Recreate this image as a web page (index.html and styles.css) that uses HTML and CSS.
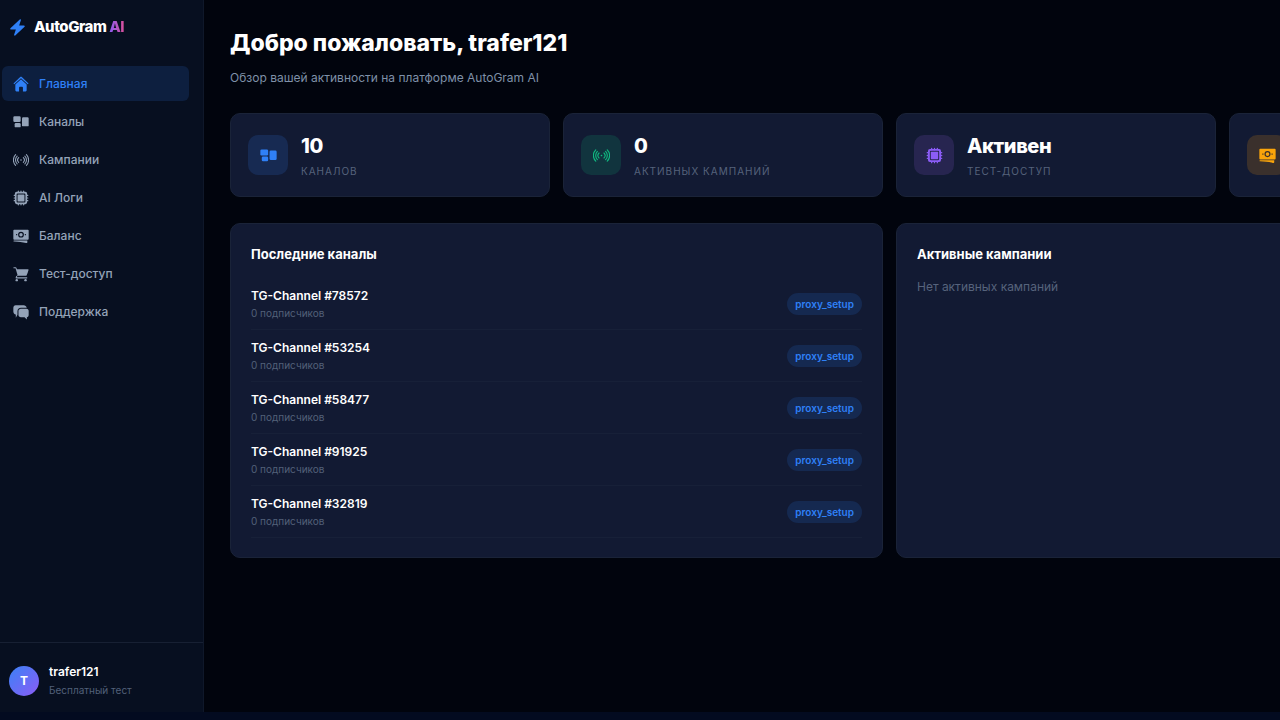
FILE: index.html
```html
<!DOCTYPE html>
<html lang="ru">
<head>
    <meta charset="UTF-8">
    <meta name="viewport" content="width=device-width, initial-scale=1.0">
    <title>AutoGram AI</title>
    <link rel="stylesheet" href="styles.css">
</head>
<body>

<svg class="sprite" aria-hidden="true">
    <symbol id="icon-home" viewBox="0 0 24 24">
        <path d="M11.2 1.3a1.2 1.2 0 0 1 1.600 0L23.300 11.200l-1.200 1.300L12 3.200l-10.100 9.300L.7 11.200z"/>
        <path d="M12 4.800l8.500 7.800v8.900a1.600 1.600 0 0 1-1.600 1.600h-4v-5.600a1.200 1.200 0 0 0-1.200-1.200h-3.400a1.200 1.200 0 0 0-1.200 1.200v5.600h-4a1.600 1.600 0 0 1-1.600-1.600v-8.900z"/>
    </symbol>
    <symbol id="icon-channels" viewBox="0 0 24 24">
        <rect x="0.5" y="3.5" width="11" height="8.5" rx="1.8"/>
        <rect x="2.5" y="13.5" width="9" height="6.5" rx="1.8"/>
        <rect x="13.5" y="5" width="10" height="13.5" rx="1.8"/>
    </symbol>
    <symbol id="icon-signal" viewBox="0 0 24 24">
        <g fill="none" stroke="currentColor" stroke-width="1.6" stroke-linecap="round">
            <path d="M3.900 4a11.300 11.300 0 0 0 0 16M20.100 4a11.300 11.300 0 0 1 0 16"/>
            <path d="M6.200 6.200a8.200 8.200 0 0 0 0 11.600M17.800 6.200a8.200 8.200 0 0 1 0 11.600"/>
            <path d="M8.500 8.500a5 5 0 0 0 0 7M15.500 8.500a5 5 0 0 1 0 7"/>
        </g>
        <circle cx="12" cy="12" r="1.2"/>
    </symbol>
    <symbol id="icon-chip" viewBox="0 0 24 24">
        <path d="M8 1.8v2M12 1.8v2M16 1.8v2M8 20.2v2M12 20.2v2M16 20.2v2M1.800 8h2M1.800 12h2M1.800 16h2M20.200 8h2M20.200 12h2M20.200 16h2" stroke="currentColor" stroke-width="1.8" stroke-linecap="round"/>
        <path fill-rule="evenodd" d="M5.500 2.800h13A2.700 2.700 0 0 1 21.200 5.500v13a2.700 2.700 0 0 1-2.700 2.700h-13A2.700 2.700 0 0 1 2.800 18.500v-13A2.700 2.700 0 0 1 5.500 2.800zM6.900 5.400A1.500 1.500 0 0 0 5.400 6.900v10.200a1.500 1.500 0 0 0 1.500 1.500h10.200a1.500 1.500 0 0 0 1.500-1.500V6.900a1.500 1.500 0 0 0-1.500-1.500z"/>
        <rect x="6.8" y="6.8" width="10.4" height="10.4" rx="0.8"/>
    </symbol>
    <symbol id="icon-cash" viewBox="0 0 24 24">
        <path fill-rule="evenodd" d="M1.800 2.500h20.400a1.300 1.300 0 0 1 1.300 1.300v12.400a1.300 1.300 0 0 1-1.300 1.300H1.800A1.300 1.300 0 0 1 .5 16.200V3.800A1.300 1.300 0 0 1 1.800 2.500zM12 5.700a4.300 4.300 0 1 0 0 8.600 4.300 4.300 0 0 0 0-8.600zM12 7.400a2.600 2.600 0 1 1 0 5.200 2.600 2.600 0 0 1 0-5.200zM4.700 9v2h1.600V9zM17.700 9v2h1.600V9z"/>
        <path d="M1.500 18.600h20v2.600c0 1-.9 1.600-1.900 1.400-5.600-1.500-11-2.300-18.100-2.400a.8.800 0 0 1 0-1.600z"/>
    </symbol>
    <symbol id="icon-cart" viewBox="0 0 24 24">
        <path d="M1.300 1.800h2.300c.9 0 1.500.5 1.700 1.300l.5 1.900h16.800c.6 0 .9.500.7 1-.9 3.100-1.900 5.700-3 8.200-.2.400-.5.600-.9.600H8.200a2.500 2.500 0 0 0-2.500 2.200h15.600v1.600H4.800a.9.900 0 0 1-.9-.9 4.200 4.200 0 0 1 3-4L3.800 3.400H1.300a.8.800 0 0 1 0-1.600z"/>
        <circle cx="5.600" cy="21.200" r="1.800"/>
        <circle cx="18.800" cy="21.200" r="1.800"/>
    </symbol>
    <symbol id="icon-chat" viewBox="0 0 24 24">
        <path d="M4 1.800h12c2.200 0 4.200 1.500 4.600 3.900H12c-3.200 0-5.300 2-5.300 5.100v5.400L4.200 20.500v-4.600C1.900 15.500.5 13.800.5 11.400V6c0-2.400 1.400-4.200 3.500-4.200z"/>
        <path d="M11.800 7.200h8.500c2 0 3.200 1.400 3.200 3.300v6c0 1.800-1 3-2.700 3.200v3.500l-3.500-3.400h-5.500c-2 0-3.600-1.300-3.600-3.300v-6c0-1.900 1.600-3.300 3.600-3.300z"/>
    </symbol>
</svg>

<div class="app">
    <aside class="sidebar">
        <a class="logo" href="#">
            <svg class="logo-icon" viewBox="0 0 24 24" aria-hidden="true"><path d="M15.200.8c.7-.7 1.900 0 1.600 1L14.300 9.200h6.900c1 0 1.400 1.100.8 1.800L8.800 23.200c-.7.700-1.900 0-1.600-1l2.500-7.400H2.800c-1 0-1.400-1.100-.8-1.800z"/></svg>
            <span class="logo-text">AutoGram <span class="logo-accent">AI</span></span>
        </a>

        <nav class="nav">
            <a class="nav-item active" href="#"><svg class="icon"><use href="#icon-home"/></svg>Главная</a>
            <a class="nav-item" href="#"><svg class="icon"><use href="#icon-channels"/></svg>Каналы</a>
            <a class="nav-item" href="#"><svg class="icon"><use href="#icon-signal"/></svg>Кампании</a>
            <a class="nav-item" href="#"><svg class="icon"><use href="#icon-chip"/></svg>AI Логи</a>
            <a class="nav-item" href="#"><svg class="icon"><use href="#icon-cash"/></svg>Баланс</a>
            <a class="nav-item" href="#"><svg class="icon"><use href="#icon-cart"/></svg>Тест-доступ</a>
            <a class="nav-item" href="#"><svg class="icon"><use href="#icon-chat"/></svg>Поддержка</a>
        </nav>

        <div class="user">
            <div class="avatar">T</div>
            <div>
                <div class="user-name">trafer121</div>
                <div class="user-plan">Бесплатный тест</div>
            </div>
        </div>
    </aside>

    <main class="main">
        <h1>Добро пожаловать, trafer121</h1>
        <p class="subtitle">Обзор вашей активности на платформе AutoGram AI</p>

        <div class="stats">
            <div class="card stat">
                <div class="stat-icon blue"><svg class="icon"><use href="#icon-channels"/></svg></div>
                <div>
                    <div class="stat-value">10</div>
                    <div class="stat-label">Каналов</div>
                </div>
            </div>
            <div class="card stat">
                <div class="stat-icon green"><svg class="icon"><use href="#icon-signal"/></svg></div>
                <div>
                    <div class="stat-value">0</div>
                    <div class="stat-label">Активных кампаний</div>
                </div>
            </div>
            <div class="card stat">
                <div class="stat-icon purple"><svg class="icon"><use href="#icon-chip"/></svg></div>
                <div>
                    <div class="stat-value">Активен</div>
                    <div class="stat-label">Тест-доступ</div>
                </div>
            </div>
            <div class="card stat">
                <div class="stat-icon orange"><svg class="icon"><use href="#icon-cash"/></svg></div>
            </div>
        </div>

        <div class="panels">
            <section class="card panel">
                <h2>Последние каналы</h2>
                <ul class="channels">
                    <li class="channel">
                        <div>
                            <div class="channel-name">TG-Channel #78572</div>
                            <div class="channel-subs">0 подписчиков</div>
                        </div>
                        <span class="badge">proxy_setup</span>
                    </li>
                    <li class="channel">
                        <div>
                            <div class="channel-name">TG-Channel #53254</div>
                            <div class="channel-subs">0 подписчиков</div>
                        </div>
                        <span class="badge">proxy_setup</span>
                    </li>
                    <li class="channel">
                        <div>
                            <div class="channel-name">TG-Channel #58477</div>
                            <div class="channel-subs">0 подписчиков</div>
                        </div>
                        <span class="badge">proxy_setup</span>
                    </li>
                    <li class="channel">
                        <div>
                            <div class="channel-name">TG-Channel #91925</div>
                            <div class="channel-subs">0 подписчиков</div>
                        </div>
                        <span class="badge">proxy_setup</span>
                    </li>
                    <li class="channel">
                        <div>
                            <div class="channel-name">TG-Channel #32819</div>
                            <div class="channel-subs">0 подписчиков</div>
                        </div>
                        <span class="badge">proxy_setup</span>
                    </li>
                </ul>
            </section>
            <section class="card panel">
                <h2>Активные кампании</h2>
                <p class="empty">Нет активных кампаний</p>
            </section>
        </div>
    </main>
</div>

</body>
</html>
```

FILE: styles.css
```css
* {
    box-sizing: border-box;
    margin: 0;
    padding: 0;
}
body {
    font-family: Inter, "Noto Sans", sans-serif;
    font-size: 12px;
    line-height: 18px;
    color: #ffffff;
    background: #030b20;
}
a {
    color: inherit;
    text-decoration: none;
}
.sprite {
    display: none;
}
.icon {
    width: 16px;
    height: 16px;
    fill: currentColor;
    flex-shrink: 0;
}
.app {
    display: flex;
    height: 100vh;
    padding-bottom: 8px;
    overflow: hidden;
}

/* Sidebar */
.sidebar {
    display: flex;
    flex-direction: column;
    flex: 0 0 204px;
    background: #070f20;
    border-right: 1px solid #0f182a;
}
.logo {
    display: flex;
    align-items: center;
    gap: 8px;
    padding: 17px 9px 20px;
    font-size: 15px;
    line-height: 20px;
    font-weight: 800;
    letter-spacing: -0.03em;
}
.logo-icon {
    width: 17px;
    height: 17px;
    fill: #2f80f7;
}
.logo-accent {
    background: linear-gradient(90deg, #8b5cf6, #d94f9a);
    background-clip: text;
    -webkit-background-clip: text;
    color: transparent;
}
.nav {
    display: flex;
    flex-direction: column;
    gap: 3px;
    padding: 9px 14px 9px 2px;
}
.nav-item {
    display: flex;
    align-items: center;
    gap: 10px;
    height: 35px;
    padding: 0 11px;
    border-radius: 6px;
    font-weight: 500;
    color: #94a3b8;
}
.nav-item:hover {
    color: #ffffff;
}
.nav-item.active {
    background: #0d1f3f;
    color: #2f80f7;
}
.user {
    display: flex;
    align-items: center;
    gap: 10px;
    margin-top: auto;
    padding: 20px 9px 13px;
    border-top: 1px solid #172033;
}
.avatar {
    width: 30px;
    height: 30px;
    border-radius: 50%;
    background: linear-gradient(135deg, #3b82f6, #8b5cf6);
    font-weight: 700;
    line-height: 30px;
    text-align: center;
}
.user-name {
    font-weight: 600;
}
.user-plan {
    font-size: 10px;
    color: #526079;
}

/* Content */
.main {
    flex: 1;
    min-width: 0;
    padding: 26px;
    background: #01040d;
    overflow: hidden;
}
h1 {
    font-size: 23px;
    line-height: 34px;
    font-weight: 800;
}
.subtitle {
    margin: 9px 0 26px;
    color: #7f90a8;
}
.card {
    background: #121a33;
    border: 1px solid #1a2338;
    border-radius: 10px;
}
.stats {
    display: grid;
    grid-template-columns: repeat(4, minmax(320px, 1fr));
    gap: 13px;
    margin-bottom: 26px;
}
.stat {
    display: flex;
    align-items: center;
    gap: 13px;
    padding: 16px 17px;
}
.stat-icon {
    display: flex;
    align-items: center;
    justify-content: center;
    width: 40px;
    height: 40px;
    border-radius: 10px;
}
.stat-icon .icon {
    width: 17px;
    height: 17px;
}
.stat-icon.blue {
    background: #172a52;
    color: #2f80f7;
}
.stat-icon.green {
    background: #11343e;
    color: #10b981;
}
.stat-icon.purple {
    background: #272550;
    color: #8b5cf6;
}
.stat-icon.orange {
    background: #3a302c;
    color: #fba50a;
}
.stat-value {
    font-size: 20px;
    line-height: 32px;
    font-weight: 800;
    letter-spacing: -0.02em;
}
.stat-label {
    font-size: 10px;
    letter-spacing: 1px;
    text-transform: uppercase;
    color: #56637c;
}
.panels {
    display: grid;
    grid-template-columns: repeat(2, minmax(653px, 1fr));
    gap: 13px;
}
.panel {
    padding: 20px 20px 19px;
}
h2 {
    margin-bottom: 14px;
    font-size: 13px;
    line-height: 20px;
    font-weight: 700;
}
.channels {
    list-style: none;
}
.channel {
    display: flex;
    align-items: center;
    justify-content: space-between;
    height: 52px;
    border-bottom: 1px solid #172038;
}
.channel-name {
    font-weight: 600;
}
.channel-subs {
    font-size: 10px;
    line-height: 16px;
    color: #526079;
}
.badge {
    padding: 2px 8px;
    border-radius: 11px;
    background: #152950;
    font-size: 10px;
    font-weight: 600;
    color: #2f80f7;
}
.empty {
    color: #56637c;
}
```
